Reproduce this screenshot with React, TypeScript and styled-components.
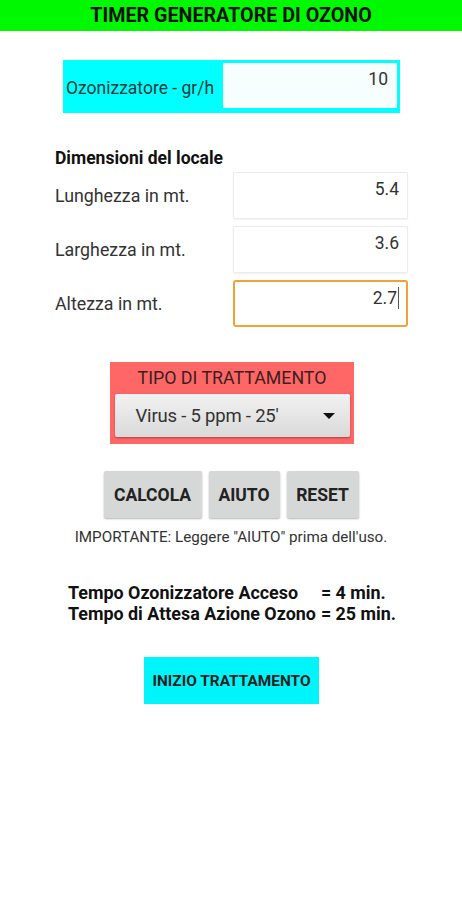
import React from 'react';
import styled, { createGlobalStyle } from 'styled-components';

const GlobalStyle = createGlobalStyle`
  html, body {
    margin: 0;
    padding: 0;
    background: #ffffff;
  }
  body {
    font-family: Roboto, 'Noto Sans', sans-serif;
    color: #222;
  }
`;

const Page = styled.div`
  width: 462px;
  min-height: 900px;
  background: #fff;
`;

const Header = styled.div`
  height: 31px;
  background: #00f800;
  display: flex;
  align-items: center;
  justify-content: center;
  font-size: 19.7px;
  font-weight: 700;
  color: #111;
`;

const OzonoBox = styled.div`
  margin: 29px 0 0 63px;
  width: 337px;
  height: 53px;
  box-sizing: border-box;
  background: #00ffff;
  display: flex;
  align-items: center;
  padding: 3px 3px 5px 3px;
`;

const OzonoLabel = styled.span`
  width: 157px;
  font-size: 17.5px;
  color: #1a3a3a;
  padding-top: 4px;
  white-space: nowrap;
`;

const OzonoInput = styled.div`
  flex: 1;
  align-self: stretch;
  background: #f6fefe;
  text-align: right;
  font-size: 17.5px;
  color: #333;
  padding: 6px 9px 0 0;
`;

const SectionTitle = styled.div`
  margin: 35px 0 0 55px;
  font-size: 17.5px;
  font-weight: 700;
  color: #111;
  line-height: 20px;
`;

const Fields = styled.div`
  display: flex;
  flex-direction: column;
  gap: 7px;
  margin: 4px 0 0 55px;
`;

const FieldRow = styled.div`
  display: flex;
  align-items: center;
  justify-content: space-between;
  width: 353px;
`;

const FieldLabel = styled.span`
  font-size: 17.8px;
  color: #333;
`;

const FieldInput = styled.div<{ $focused?: boolean }>`
  width: 175px;
  height: 47px;
  box-sizing: border-box;
  border: ${p => (p.$focused ? '2px solid #f0a235' : '1px solid #ececec')};
  border-radius: ${p => (p.$focused ? '3px' : '1px')};
  box-shadow: ${p => (p.$focused ? 'none' : '0 1px 2px rgba(0,0,0,0.06)')};
  text-align: right;
  font-size: 17.5px;
  color: #333;
  padding: ${p => (p.$focused ? '5px 7px 0 0' : '6px 8px 0 0')};
`;

const Caret = styled.span`
  display: inline-block;
  width: 1px;
  height: 22px;
  background: #555;
  vertical-align: -5px;
  margin-left: 1px;
`;

const TipoBox = styled.div`
  margin: 35px 0 0 110px;
  width: 244px;
  height: 82px;
  box-sizing: border-box;
  background: #ff6666;
  padding: 4px;
  display: flex;
  flex-direction: column;
  align-items: center;
`;

const TipoTitle = styled.div`
  font-size: 17.8px;
  color: #3a2020;
  line-height: 22px;
  margin-top: 1px;
`;

const Spinner = styled.div`
  margin-top: 5px;
  width: 235px;
  height: 43px;
  box-sizing: border-box;
  background: linear-gradient(#f2f2f2, #d9d9d9);
  box-shadow: 0 1px 2px rgba(0, 0, 0, 0.35);
  border-radius: 2px;
  display: flex;
  align-items: center;
  justify-content: space-between;
  padding: 0 15px 0 21px;
  font-size: 18.5px;
  color: #333;
  letter-spacing: -0.2px;
`;

const Triangle = styled.span`
  width: 0;
  height: 0;
  border-left: 6px solid transparent;
  border-right: 6px solid transparent;
  border-top: 6px solid #111;
`;

const ButtonRow = styled.div`
  display: flex;
  justify-content: center;
  gap: 7px;
  margin-top: 27px;
`;

const GrayButton = styled.button<{ $w: number }>`
  width: ${p => p.$w}px;
  height: 47px;
  border: none;
  border-radius: 2px;
  background: #d6d7d7;
  box-shadow: 0 1px 2px rgba(0, 0, 0, 0.3);
  font-family: Roboto, sans-serif;
  font-size: 17.5px;
  font-weight: 700;
  color: #222;
  padding: 0;
`;

const Note = styled.div`
  margin-top: 10px;
  text-align: center;
  font-size: 15.2px;
  color: #333;
`;

const Results = styled.div`
  margin: 36px 0 0 68px;
  display: grid;
  grid-template-columns: auto auto;
  justify-content: start;
  column-gap: 5px;
  font-size: 17.9px;
  font-weight: 700;
  color: #111;
  line-height: 21px;
`;

const StartButton = styled.button`
  display: block;
  margin: 33px 0 0 144px;
  width: 175px;
  height: 47px;
  border: none;
  background: #00f5fa;
  font-family: Roboto, sans-serif;
  font-size: 15.4px;
  font-weight: 700;
  color: #222;
  padding: 0;
`;

const fields = [
  { label: 'Lunghezza in mt.', value: '5.4' },
  { label: 'Larghezza in mt.', value: '3.6' },
  { label: 'Altezza in mt.', value: '2.7', focused: true }
];

const results = [
  { label: 'Tempo Ozonizzatore Acceso', value: '= 4 min.' },
  { label: 'Tempo di Attesa Azione Ozono', value: '= 25 min.' }
];

export default function App() {
  return (
    <Page>
      <GlobalStyle />
      <Header>TIMER GENERATORE DI OZONO</Header>
      <OzonoBox>
        <OzonoLabel>Ozonizzatore - gr/h</OzonoLabel>
        <OzonoInput>10</OzonoInput>
      </OzonoBox>
      <SectionTitle>Dimensioni del locale</SectionTitle>
      <Fields>
        {fields.map(f => (
          <FieldRow key={f.label}>
            <FieldLabel>{f.label}</FieldLabel>
            <FieldInput $focused={f.focused}>
              {f.value}
              {f.focused && <Caret />}
            </FieldInput>
          </FieldRow>
        ))}
      </Fields>
      <TipoBox>
        <TipoTitle>TIPO DI TRATTAMENTO</TipoTitle>
        <Spinner>
          <span>Virus - 5 ppm - 25'</span>
          <Triangle />
        </Spinner>
      </TipoBox>
      <ButtonRow>
        <GrayButton $w={98}>CALCOLA</GrayButton>
        <GrayButton $w={71}>AIUTO</GrayButton>
        <GrayButton $w={72}>RESET</GrayButton>
      </ButtonRow>
      <Note>IMPORTANTE: Leggere "AIUTO" prima dell'uso.</Note>
      <Results>
        {results.map(r => (
          <React.Fragment key={r.label}>
            <span>{r.label}</span>
            <span>{r.value}</span>
          </React.Fragment>
        ))}
      </Results>
      <StartButton>INIZIO TRATTAMENTO</StartButton>
    </Page>
  );
}
